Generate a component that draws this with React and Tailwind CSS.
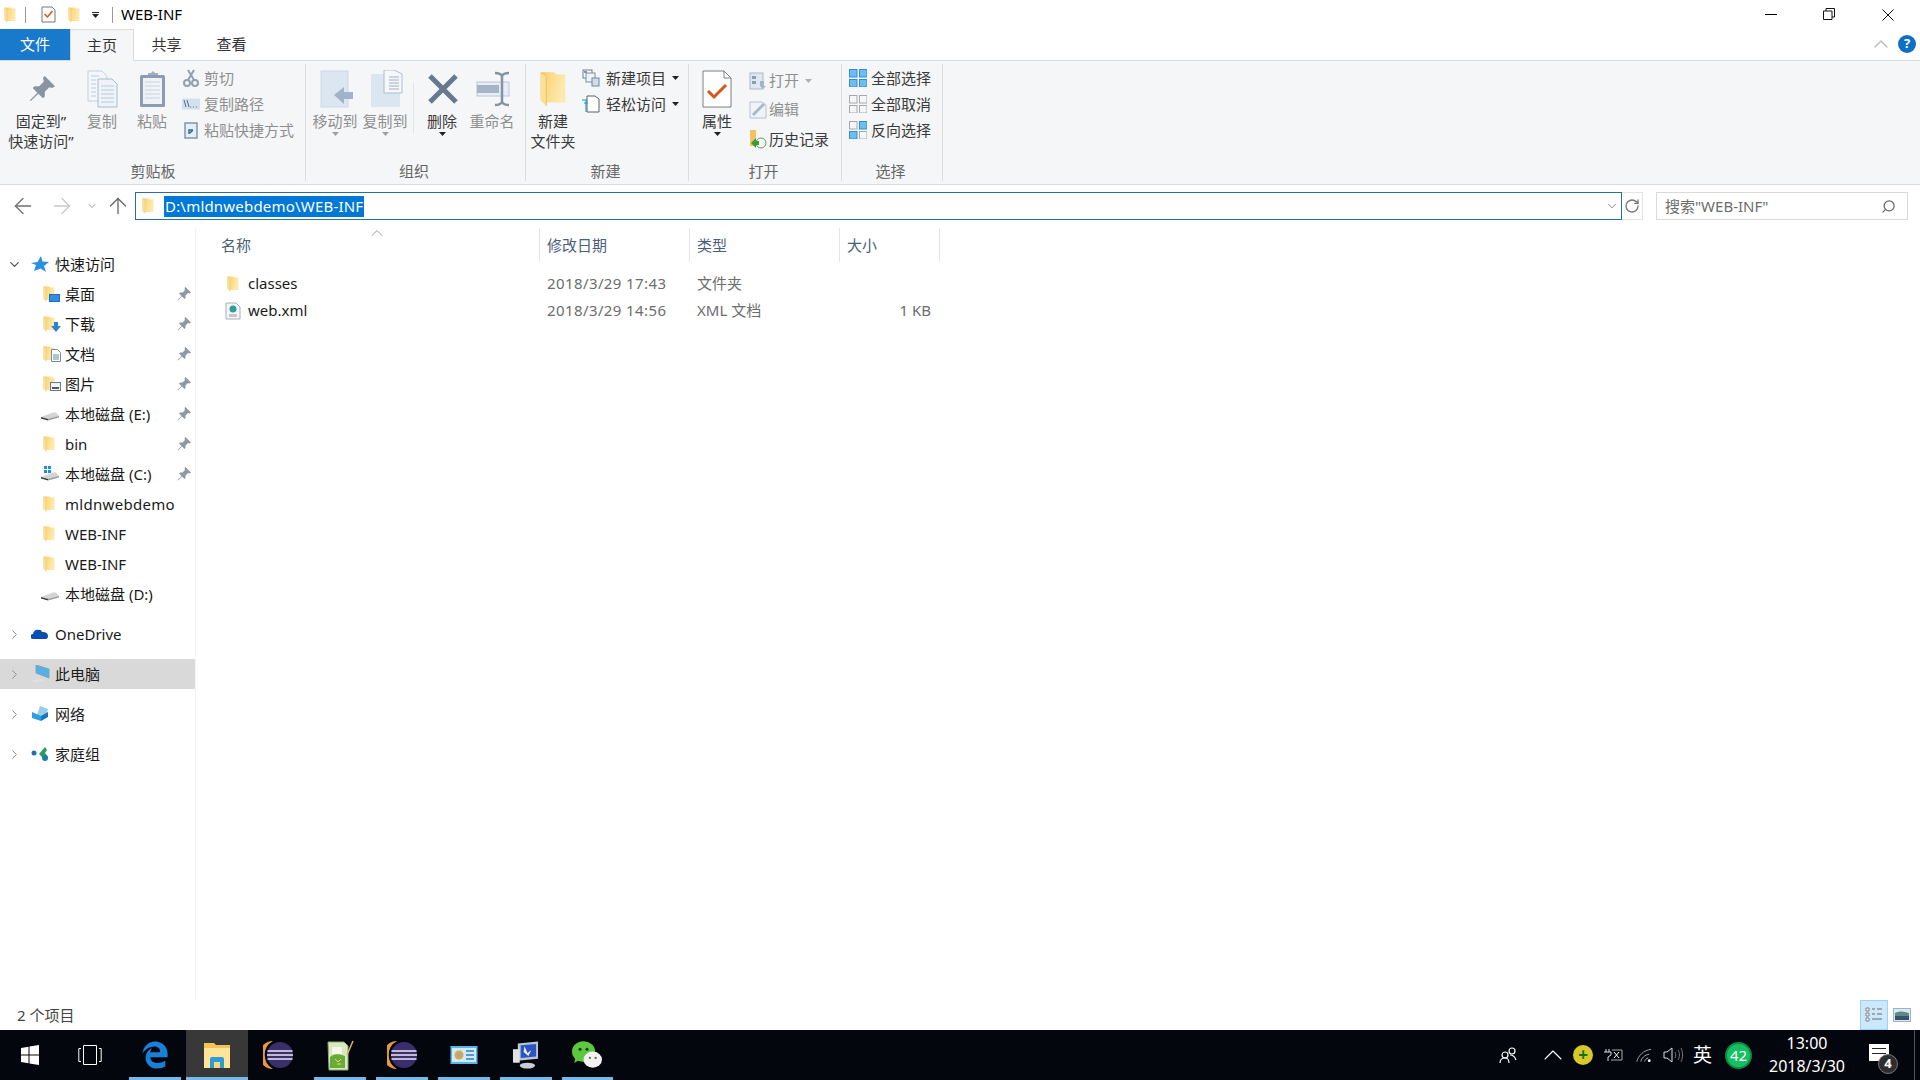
import { ArrowLeft, ArrowRight, ArrowUp, ChevronDown, ChevronRight, ChevronUp, RotateCw, Search } from 'lucide-react';
import { FaEdgeLegacy } from 'react-icons/fa6';

const Folder = ({ className = 'w-[12px] h-4' }) => (
  <svg viewBox="0 0 24 32" className={className}>
    <defs>
      <linearGradient id="folderBody" x1="0" y1="0" x2="1" y2="0.300">
        <stop offset="0" stopColor="#f3bf55" />
        <stop offset="0.350" stopColor="#fbd985" />
        <stop offset="1" stopColor="#fdeaae" />
      </linearGradient>
    </defs>
    <path d="M1 1h12l2 2h8v25H3l-2-3z" fill="url(#folderBody)" />
    <path d="M1 2l5 3v26l-5-5z" fill="#fbe09a" />
    <path d="M6 5v26" stroke="#efc263" strokeWidth="1" />
  </svg>
);

const Pin = ({ className = 'w-[14px] h-[14px]', color = '#8f98a2' }) => (
  <svg viewBox="0 0 14 14" className={className}>
    <path d="M8.500 0L14 5.500L12.500 6.500L11 6L8.500 8.500L8.500 11L7.500 12L5 9.500L1 13.500L0.500 13L4.500 9L2 6.500L3 5.500L5.500 5.500L8 3L7.500 1z" fill={color} />
  </svg>
);

const Drive = ({ win }) => (
  <svg viewBox="0 0 20 16" className="w-5 h-4">
    <path d="M1 11L13 6.500h3L19 10L8 14z" fill="#d4d4d4" />
    <path d="M1 11L8 13v1.500L1 12.500z" fill="#3c3c3c" />
    <path d="M8 13L19 10v1.500L8 14.500z" fill="#9a9a9a" />
    {win && <path d="M4 0h3v3H4zM8 0h3v3H8zM4 4h3v3H4zM8 4h3v3H8z" fill="#1e8fe0" />}
  </svg>
);

const Caret = ({ color = '#333', className = '' }) => (
  <svg viewBox="0 0 7 4" className={`w-[7px] h-1 ${className}`}>
    <path d="M0 0h7L3.500 4z" fill={color} />
  </svg>
);

const PinBig = () => <Pin className="w-[26px] h-[26px] ml-[2px]" color="#8a94a0" />;

const DocsIcon = () => (
  <svg viewBox="0 0 32 38" className="w-8 h-[38px] ml-[2px]">
    <path d="M1 1h14l5 5v25H1z" fill="#f3f6fa" stroke="#c3d0de" />
    <path d="M11 9h14l5 5v23H11z" fill="#eef3f9" stroke="#a9bbd0" />
    <path d="M4 6h8M4 10h5M4 14h5M4 18h5M4 22h5M4 26h5M14 16h13M14 20h13M14 24h13M14 28h13M14 32h13" stroke="#bccbdb" />
  </svg>
);

const PasteIcon = () => (
  <svg viewBox="0 0 28 38" className="w-[28px] h-[38px] ml-[1px]">
    <rect x="1" y="5" width="25" height="32" rx="1.500" fill="#8e9cb3" />
    <rect x="4" y="8" width="19" height="26" fill="#eef2f7" />
    <path d="M6 12h15M6 16h15M6 20h15M6 24h15M6 28h15" stroke="#c9d4e0" />
    <path d="M9 5h10V3h-3l-2-2-2 2H9z" fill="#a4aebd" />
  </svg>
);

const MoveIcon = () => (
  <svg viewBox="0 0 34 38" className="w-[34px] h-[38px] ml-[3px]">
    <rect x="1" y="1" width="27" height="36" fill="#dce6f1" stroke="#ccd8e6" />
    <path d="M14 25l10-8v5h9v7h-9v5z" fill="#9fb3ca" />
  </svg>
);

const CopyToIcon = () => (
  <svg viewBox="0 0 34 38" className="w-[34px] h-[38px] ml-[3px]">
    <rect x="1" y="4" width="29" height="33" fill="#dce6f1" />
    <path d="M14 0h10l8 4v19H14z" fill="#f5f7fa" stroke="#aebdce" />
    <path d="M19 7h10M19 10h10M19 13h10M19 16h10M19 19h10" stroke="#9eafc3" />
  </svg>
);

const DeleteIcon = () => (
  <svg viewBox="0 0 32 32" className="w-8 h-8 ml-[1px]">
    <path d="M3 3L29 29M29 3L3 29" stroke="#67798f" strokeWidth="5" />
  </svg>
);

const RenameIcon = () => (
  <svg viewBox="0 0 36 36" className="w-9 h-9 ml-[3px]">
    <rect x="1" y="11" width="32" height="14" fill="#e6edf5" stroke="#b8c8d8" />
    <rect x="1" y="14" width="22" height="8" fill="#a5b4c6" />
    <path d="M19 2c4 0 6 1 7 3c1-2 3-3 7-3M26 5v26M19 34c4 0 6-1 7-3c1 2 3 3 7 3" stroke="#8593a5" strokeWidth="2.500" fill="none" />
  </svg>
);

const NewFolderBig = () => <Folder className="w-[28px] h-[36px] mt-[1px]" />;

const NewItem = () => (
  <svg viewBox="0 0 18 18" className="w-[18px] h-[18px]">
    <rect x="1" y="1" width="9" height="8" fill="#fff" stroke="#6d7f92" />
    <rect x="4" y="4" width="9" height="9" fill="#eef3f8" stroke="#7d8ea1" />
    <rect x="10" y="9" width="7" height="8" fill="#cfdeee" stroke="#6f88a1" />
    <path d="M2 2h3v2H2z" fill="#7f93a8" />
  </svg>
);

const EasyAccess = () => (
  <svg viewBox="0 0 18 18" className="w-[18px] h-[18px]">
    <path d="M5 1h8l4 3v13H5z" fill="#fff" stroke="#53606e" />
    <path d="M0 5h5M2 8h4M4 5v12" stroke="#1c8dd9" strokeWidth="1" fill="none" />
  </svg>
);

const Props = () => (
  <svg viewBox="0 0 30 38" className="w-[30px] h-[38px]">
    <path d="M1 1h21l7 7v29H1z" fill="#fff" stroke="#7b7f84" />
    <path d="M22 1v7h7" fill="none" stroke="#7b7f84" />
    <path d="M6 21l6 6L24 15" fill="none" stroke="#d8541f" strokeWidth="3" />
  </svg>
);

const OpenIcon = () => (
  <svg viewBox="0 0 18 18" className="w-[18px] h-[18px]">
    <rect x="1" y="1" width="13" height="16" fill="#dfe7f0" stroke="#a9b8c8" />
    <path d="M3 4h4v3H3zM3 9h4v3H3z" fill="#8b9db2" />
    <path d="M11 9h4v5h2l-3 3-3-3z" fill="#a5b6c9" />
  </svg>
);

const EditIcon = () => (
  <svg viewBox="0 0 18 18" className="w-[18px] h-[18px]">
    <path d="M1 1h12l4 3v13H1z" fill="#f0f4f8" stroke="#b5c3d2" />
    <path d="M4 14L15 3" stroke="#a9b9ca" strokeWidth="3" />
  </svg>
);

const HistoryIcon = () => (
  <svg viewBox="0 0 18 20" className="w-[18px] h-5">
    <path d="M1 1h6v16H1z" fill="#f0c45f" />
    <circle cx="12" cy="14" r="5" fill="#f4f6f4" stroke="#61a05a" />
    <path d="M2 14l5-5v3h3v4H7v3z" fill="#3d9a3c" />
  </svg>
);

const SelectIcon = ({ cells }) => (
  <svg viewBox="0 0 18 18" className="w-[18px] h-[18px]">
    {[[0, 0], [10, 0], [0, 10], [10, 10]].map(([x, y], i) => (
      <rect key={i} x={x + 0.5} y={y + 0.5} width="7.500" height="7.500" fill={cells[i] ? '#6fbcf0' : '#f5f6f7'} stroke={cells[i] ? '#2f8fd6' : '#a8a8a8'} />
    ))}
  </svg>
);

const BigButton = ({ w = 'w-[50px]', icon, lines, disabled, arrow }) => (
  <div className={`${w} shrink-0 flex flex-col items-center pt-[4px]`}>
    <div className="h-[43px] pb-[2px] flex items-center justify-center">{icon}</div>
    {lines.map((l) => (
      <div key={l} className={`leading-5 whitespace-nowrap ${disabled ? 'text-[#8f8f8f]' : 'text-[#3a3a3a]'}`}>{l}</div>
    ))}
    {arrow && <Caret className="mt-[1px]" color={disabled ? '#a0a0a0' : '#222'} />}
  </div>
);

const SmallButton = ({ icon, label, disabled, arrow, h = 'h-[26px]', gap = 'gap-[5px]', arrowGap = 'ml-0' }) => (
  <div className={`${h} flex items-center ${gap} whitespace-nowrap ${disabled ? 'text-[#8f8f8f]' : 'text-[#3a3a3a]'}`}>
    <span className="w-[18px] flex justify-center shrink-0">{icon}</span>
    <span>{label}</span>
    {arrow && <Caret className={arrowGap} color={disabled ? '#b0b0b0' : '#222'} />}
  </div>
);

const Group = ({ w, label, children, pad, labelPad = 'pr-[3px]' }) => (
  <div className={`${w} shrink-0 flex flex-col border-r border-[#dcdddf] mt-[3px] mb-[3px]`}>
    <div className={`flex flex-1 items-start ${pad}`}>{children}</div>
    <div className={`h-5 ${labelPad} leading-5 text-center text-[#666]`}>{label}</div>
  </div>
);

const Ribbon = () => (
  <div className="h-[124px] bg-[#f5f6f7] border-b border-[#dadbdc] flex text-[15px] shrink-0">
    <Group w="w-[306px]" label="剪贴板" pad="pl-[5px]" labelPad="pl-px">
      <BigButton w="w-[72px]" icon={<PinBig />} lines={['固定到”', '快速访问”']} />
      <BigButton icon={<DocsIcon />} lines={['复制']} disabled />
      <BigButton icon={<PasteIcon />} lines={['粘贴']} disabled />
      <div className="pl-[5px] pt-[1px] flex flex-col">
        <SmallButton disabled gap="gap-1" label="剪切" icon={<svg viewBox="0 0 16 18" className="w-4 h-[18px]"><path d="M5 1l6 10M11 1L5 11" stroke="#8fa1b5" strokeWidth="2" /><circle cx="4" cy="14" r="3" fill="none" stroke="#8fa1b5" strokeWidth="2" /><circle cx="12" cy="14" r="3" fill="none" stroke="#8fa1b5" strokeWidth="2" /></svg>} />
        <SmallButton disabled gap="gap-1" label="复制路径" icon={<svg viewBox="0 0 18 12" className="w-[18px] h-3"><rect width="18" height="11" y="0.500" fill="#d4e0ee" /><path d="M2 2l2 7M5 2l2 7M8 9h1M11 9h1M14 9h1" stroke="#52708f" /></svg>} />
        <SmallButton disabled gap="gap-1" label="粘贴快捷方式" icon={<svg viewBox="0 0 14 18" className="w-[14px] h-[18px]"><rect x="1" y="2" width="12" height="15" fill="#e7edf4" stroke="#7f96ae" strokeWidth="1.500" /><path d="M5 13V9h4M9 9L6 12" stroke="#2c6ea8" strokeWidth="1.500" fill="none" /></svg>} />
      </div>
    </Group>
    <Group w="w-[220px]" label="组织" pad="pl-[4px]">
      <BigButton icon={<MoveIcon />} lines={['移动到']} disabled arrow />
      <BigButton icon={<CopyToIcon />} lines={['复制到']} disabled arrow />
      <div className="w-px h-[50px] bg-[#e3e4e6] mt-[19px] mx-[3px]" />
      <BigButton icon={<DeleteIcon />} lines={['删除']} arrow />
      <BigButton icon={<RenameIcon />} lines={['重命名']} disabled />
    </Group>
    <Group w="w-[163px]" label="新建" pad="pl-[2px]">
      <BigButton icon={<NewFolderBig />} lines={['新建', '文件夹']} />
      <div className="pl-[4px] pt-[1px] flex flex-col">
        <SmallButton gap="gap-[6px]" label="新建项目" icon={<NewItem />} arrow />
        <SmallButton gap="gap-[6px]" label="轻松访问" icon={<EasyAccess />} arrow />
      </div>
    </Group>
    <Group w="w-[153px]" label="打开" pad="pl-[3px]">
      <BigButton icon={<Props />} lines={['属性']} arrow />
      <div className="pl-[7px] pt-[2px] flex flex-col">
        <SmallButton disabled h="h-[29px]" gap="gap-[2px]" arrowGap="ml-1" label="打开" icon={<OpenIcon />} arrow />
        <SmallButton disabled h="h-[29px]" gap="gap-[2px]" label="编辑" icon={<EditIcon />} />
        <SmallButton h="h-[30px]" gap="gap-[2px]" label="历史记录" icon={<HistoryIcon />} />
      </div>
    </Group>
    <Group w="w-[101px]" label="选择" pad="pl-[7px]">
      <div className="pt-[1px] flex flex-col">
        <SmallButton gap="gap-1" label="全部选择" icon={<SelectIcon cells={[1, 1, 1, 1]} />} />
        <SmallButton gap="gap-1" label="全部取消" icon={<SelectIcon cells={[0, 0, 0, 0]} />} />
        <SmallButton gap="gap-1" label="反向选择" icon={<SelectIcon cells={[0, 1, 1, 0]} />} />
      </div>
    </Group>
  </div>
);

const TitleBar = () => (
  <div className="h-[29px] flex items-center shrink-0">
    <Folder className="w-3 h-4 ml-1" />
    <div className="w-px h-4 bg-[#999] ml-[9px]" />
    <svg viewBox="0 0 15 17" className="w-[15px] h-[17px] ml-[15px]">
      <path d="M1 1h10l3 3v12H1z" fill="#fff" stroke="#777" />
      <path d="M3.500 8l3 3 5-6" fill="none" stroke="#d8541f" strokeWidth="1.500" />
    </svg>
    <Folder className="w-3 h-4 ml-3" />
    <div className="ml-[12px] flex flex-col items-center gap-[1px]">
      <div className="w-[7px] h-px bg-[#222]" />
      <Caret color="#222" />
    </div>
    <div className="w-px h-4 bg-[#999] ml-[13px]" />
    <span className="ml-2 text-[15px] text-black">WEB-INF</span>
    <div className="ml-auto flex items-center">
      <div className="w-3 h-px bg-black mr-[46px]" />
      <svg viewBox="0 0 12 12" className="w-3 h-3 mr-[47px] mb-[1px]">
        <path d="M0.500 3h8.500v8.500H0.500zM3 3V0.500h8.500V9H9" fill="none" stroke="#111" />
      </svg>
      <svg viewBox="0 0 12 12" className="w-3 h-3 mr-[26px]">
        <path d="M0.500 0.500L11.500 11.500M11.500 0.500L0.500 11.500" stroke="#111" />
      </svg>
    </div>
  </div>
);

const Tabs = () => (
  <div className="h-[32px] flex text-[15px] border-b border-[#dadbdc] shrink-0">
    <div className="w-[70px] h-[31px] bg-[#1979ca] text-white flex items-center justify-center">文件</div>
    <div className="w-[64px] h-[32px] bg-[#f5f6f7] border-x border-t border-[#dadbdc] text-[#333] flex items-center justify-center">主页</div>
    <div className="w-[65px] flex items-center justify-center text-[#333]">共享</div>
    <div className="w-[65px] flex items-center justify-center text-[#333]">查看</div>
    <div className="ml-auto flex items-center mb-[1px]">
      <ChevronUp size={24} strokeWidth={1.500} className="text-[#bdbdbd] mr-[5px]" />
      <div className="w-[18px] h-[18px] mr-[4px] rounded-full bg-[#0f6fc6] text-white text-[13px] font-bold flex items-center justify-center">?</div>
    </div>
  </div>
);

const AddressBar = () => (
  <div className="h-[43px] flex items-start pt-[7px] shrink-0 text-[15px]">
    <ArrowLeft size={26} strokeWidth={1.200} className="text-[#6f6f6f] ml-[10px] mt-[1px]" />
    <ArrowRight size={26} strokeWidth={1.200} className="text-[#c9c9c9] ml-[13px] mt-[1px]" />
    <ChevronDown size={12} strokeWidth={1.500} className="text-[#777] ml-[11px] mt-2" />
    <ArrowUp size={26} strokeWidth={1.200} className="text-[#666] ml-[7px] mt-[1px]" />
    <div className="ml-1 w-[1487px] h-[28px] border border-[#2a6ea5] bg-white flex items-center">
      <Folder className="w-3 h-4 ml-[6px]" />
      <span className="ml-[10px] bg-[#0078d7] text-white h-[21px] leading-[21px] px-px tracking-[0.2px]">D:\mldnwebdemo\WEB-INF</span>
      <ChevronDown size={14} strokeWidth={1.200} className="text-[#555] ml-auto mr-[2px]" />
    </div>
    <div className="w-[21px] h-[28px] border border-l-0 border-[#e3e3e3] flex items-center justify-center">
      <RotateCw size={16} strokeWidth={2} className="text-[#777]" />
    </div>
    <div className="ml-[13px] w-[252px] h-[28px] border border-[#d9d9d9] flex items-center pl-2 pr-[11px] text-[#6d6d6d]">
      <span>搜索"WEB-INF"</span>
      <Search size={15} strokeWidth={2} className="ml-auto text-[#666] -scale-x-100" />
    </div>
  </div>
);

const navItems = [
  { label: '桌面', badge: 'desk', pin: true },
  { label: '下载', badge: 'down', pin: true },
  { label: '文档', badge: 'doc', pin: true },
  { label: '图片', badge: 'pic', pin: true },
  { label: '本地磁盘 (E:)', drive: true, pin: true },
  { label: 'bin', pin: true },
  { label: '本地磁盘 (C:)', drive: true, win: true, pin: true },
  { label: 'mldnwebdemo', wide: true },
  { label: 'WEB-INF' },
  { label: 'WEB-INF' },
  { label: '本地磁盘 (D:)', drive: true },
];

const Badge = ({ type }) => {
  if (type === 'desk') return <span className="absolute right-0 bottom-0 w-[11px] h-[8px] bg-[#2e8fe0] border border-[#1b6fb8]" />;
  if (type === 'down') return <svg viewBox="0 0 10 10" className="absolute -right-[1px] bottom-0 w-[10px] h-[10px]"><path d="M3 0h4v4h3L5 10 0 4h3z" fill="#2d7fd8" /></svg>;
  if (type === 'doc') return (
    <svg viewBox="0 0 10 13" className="absolute -right-[1px] bottom-0 w-[10px] h-[13px]">
      <path d="M0.500 0.500h6l3 3v9h-9z" fill="#fff" stroke="#7d8c9c" />
      <path d="M2 6h6M2 8h6M2 10h6" stroke="#5b87b5" />
    </svg>
  );
  return (
    <svg viewBox="0 0 11 9" className="absolute -right-[1px] bottom-[1px] w-[11px] h-[9px]">
      <rect x="0.500" y="0.500" width="10" height="8" fill="#f2f5f8" stroke="#68788a" />
      <path d="M2 6h7" stroke="#4d5d70" strokeWidth="2" />
    </svg>
  );
};

const NavRow = ({ item }) => (
  <div className="h-[30px] flex items-center">
    <span className="relative w-5 h-4 ml-[40px] flex justify-start shrink-0">
      {item.drive ? <Drive win={item.win} /> : <Folder className="w-3 h-4 ml-[3px]" />}
      {item.badge && <Badge type={item.badge} />}
    </span>
    <span className={`ml-[5px] whitespace-nowrap ${item.wide ? 'tracking-[0.3px]' : ''}`}>{item.label}</span>
    {item.pin && <Pin className="w-[14px] h-[14px] ml-auto mr-1" />}
  </div>
);

const OneDriveIcon = () => (
  <svg viewBox="0 0 18 12" className="w-[18px] h-3">
    <path d="M2 11a2.500 2.500 0 0 1 0-5c.5-3 3-5 5.500-4 1.500-.5 3 .5 3.500 2 3-.5 6 1 6 4 0 2-1 3-2 3z" fill="#0a4fb0" />
  </svg>
);

const PcIcon = () => (
  <svg viewBox="0 0 20 18" className="w-5 h-[18px]">
    <path d="M6 0l13 4v9L6 8z" fill="#55b0e6" stroke="#7fa5bf" />
    <path d="M1 16l9-2 5 1-9 2z" fill="#dfe3e6" />
  </svg>
);

const NetIcon = () => (
  <svg viewBox="0 0 18 16" className="w-[18px] h-4">
    <path d="M9 0l8 3-2 8-10 1z" fill="#9ccde8" />
    <path d="M1 6l9 4v5l-9-3z" fill="#2f9ee0" />
    <path d="M10 10l7-4v5l-7 4z" fill="#1677bd" />
  </svg>
);

const HomeGroupIcon = () => (
  <svg viewBox="0 0 18 14" className="w-[18px] h-[14px]">
    <circle cx="3" cy="6" r="2.500" fill="#1f6fb8" />
    <path d="M14 0l2 3-2 3 3 4-3 3-6-6z" fill="#2f9a5d" />
    <circle cx="14" cy="11" r="3" fill="#1c7fa8" />
  </svg>
);

const TopRow = ({ icon, label, active, open }) => (
  <div className={`h-[30px] flex items-center ${active ? 'bg-[#d9d9d9]' : ''}`}>
    <span className={`w-[30px] flex justify-center shrink-0 ${open ? 'pr-[2px]' : 'pr-px'}`}>
      {open ? <ChevronDown size={15} strokeWidth={2} className="text-[#555]" /> : <ChevronRight size={15} strokeWidth={1.500} className="text-[#8a8a8a]" />}
    </span>
    <span className="w-5 flex justify-center shrink-0">{icon}</span>
    <span className="ml-[5px]">{label}</span>
  </div>
);

const Sidebar = () => (
  <div className="w-[196px] shrink-0 border-r border-[#f4f4f4] pt-[21px] text-[15px] text-[#1a1a1a]">
    <TopRow open label="快速访问" icon={
      <svg viewBox="0 0 18 16" className="w-[18px] h-4"><path d="M10 0l1.500 5.500L18 6l-5 4 2 6-5.500-3.500L3 15l2-6L0 7l6.500-1z" fill="#2a8fe0" /></svg>
    } />
    {navItems.map((item, i) => <NavRow key={i} item={item} />)}
    <div className="mt-[10px]"><TopRow label="OneDrive" icon={<OneDriveIcon />} /></div>
    <div className="mt-[10px]"><TopRow active label="此电脑" icon={<PcIcon />} /></div>
    <div className="mt-[10px]"><TopRow label="网络" icon={<NetIcon />} /></div>
    <div className="mt-[10px]"><TopRow label="家庭组" icon={<HomeGroupIcon />} /></div>
  </div>
);

const XmlIcon = () => (
  <svg viewBox="0 0 16 18" className="w-4 h-[18px]">
    <path d="M1 1h10l4 4v12H1z" fill="#f6f4f6" stroke="#a8b0b8" />
    <circle cx="8" cy="7" r="3.500" fill="#2f9e9b" />
    <path d="M4 12h8v3H4z" fill="#c9c3cb" />
  </svg>
);

const columns = [
  { label: '名称', w: 'w-[344px]', pad: 'pl-[25px]' },
  { label: '修改日期', w: 'w-[150px]', pad: 'pl-[7px]' },
  { label: '类型', w: 'w-[150px]', pad: 'pl-[7px]' },
  { label: '大小', w: 'w-[100px]', pad: 'pl-[7px]' },
];

const files = [
  { name: 'classes', date: '2018/3/29 17:43', type: '文件夹', size: '', icon: <Folder className="w-3 h-4" /> },
  { name: 'web.xml', date: '2018/3/29 14:56', type: 'XML 文档', size: '1 KB', icon: <XmlIcon /> },
];

const FileList = () => (
  <div className="flex-1 text-[15px]">
    <div className="relative flex h-[34px]">
      {columns.map((c) => (
        <div key={c.label} className={`${c.w} ${c.pad} shrink-0 border-r border-[#e5e5e5] flex items-center text-[#4c607a]`}>{c.label}</div>
      ))}
      <ChevronUp size={20} strokeWidth={1} className="absolute left-[171px] -top-[5px] text-[#888]" />
    </div>
    <div className="pt-2">
      {files.map((f) => (
        <div key={f.name} className="flex h-[27px] items-center">
          <div className="w-[344px] shrink-0 flex items-center pl-[28px]">
            <span className="w-[17px] flex justify-center">{f.icon}</span>
            <span className="ml-[7px] text-[#1a1a1a]">{f.name}</span>
          </div>
          <div className="w-[150px] shrink-0 pl-[7px] text-[#6d6d6d] tracking-[0.4px]">{f.date}</div>
          <div className="w-[150px] shrink-0 pl-[7px] text-[#6d6d6d]">{f.type}</div>
          <div className="w-[100px] shrink-0 pr-[9px] text-right text-[#6d6d6d]">{f.size}</div>
        </div>
      ))}
    </div>
  </div>
);

const StatusBar = () => (
  <div className="h-[31px] pt-[1px] flex items-center text-[15px] text-[#444] shrink-0">
    <span className="ml-[17px]">2 个项目</span>
    <div className="ml-auto flex items-center mr-[9px]">
      <div className="w-[28px] h-[30px] bg-[#cce8ff] border border-[#99d1ff] flex items-center justify-center">
        <svg viewBox="0 0 18 16" className="w-[18px] h-4">
          <path d="M1 1h3v3H1zM1 6h3v3H1zM1 11h3v3H1z" fill="#fff" stroke="#666" strokeWidth="0.800" />
          <path d="M7 2h3M12 2h5M7 7h3M12 7h5M7 12h10" stroke="#666" />
        </svg>
      </div>
      <svg viewBox="0 0 18 14" className="ml-[5px] w-[18px] h-[14px]">
        <rect x="0.500" y="0.500" width="17" height="13" fill="#dce8f0" stroke="#9eb3c7" />
        <path d="M2 5c4-2 9-2 14 0v3H2z" fill="#5e8a86" />
        <path d="M2 8h14v4H2z" fill="#35536a" />
      </svg>
    </div>
  </div>
);

const EclipseIcon = () => (
  <svg viewBox="0 0 30 30" className="w-[30px] h-[30px]">
    <path d="M10 1A14 14 0 0 0 10 29A16 16 0 0 1 10 1z" fill="#e59a3e" />
    <circle cx="17" cy="15" r="13" fill="#3a2f6c" />
    <path d="M4.500 11h25M4 15h26M4.500 19h25" stroke="#eceaf5" strokeWidth="1.500" />
  </svg>
);

const ExplorerIcon = () => (
  <svg viewBox="0 0 28 30" className="w-[28px] h-[30px]">
    <path d="M1 3h10l2 2h14v23H1z" fill="#f1c45a" />
    <path d="M1 8h26v20H1z" fill="#fce59a" />
    <path d="M7 28v-9a2 2 0 0 1 2-2h10a2 2 0 0 1 2 2v9z" fill="#2c9bd6" />
    <path d="M11 28v-6h6v6z" fill="#fbd97a" />
  </svg>
);

const BookIcon = () => (
  <svg viewBox="0 0 27 32" className="w-[27px] h-8">
    <path d="M1 3h16l4 4v24H2z" fill="#d9e8c0" stroke="#8aa873" />
    <path d="M5 8h10v7H5z" fill="#f4f7e8" />
    <path d="M3 18c3-3 8-4 15-1v12H3z" fill="#68ab39" />
    <path d="M8 20l3 3 3-3M10 25h4" stroke="#e8d85f" fill="none" />
    <path d="M20 16L26 2" stroke="#d9b85f" strokeWidth="1.500" />
  </svg>
);

const CardIcon = () => (
  <svg viewBox="0 0 28 20" className="w-[28px] h-5">
    <rect x="0.500" y="1" width="27" height="18" fill="#58b4ea" />
    <rect x="2" y="3" width="24" height="14" fill="#cfeafa" />
    <circle cx="9" cy="10" r="4.500" fill="#eaa23a" />
    <circle cx="9" cy="10" r="2" fill="#6fb7e0" />
    <path d="M16 6h8M16 10h8M16 14h8" stroke="#2f7fc1" strokeWidth="1.500" />
  </svg>
);

const MonitorIcon = () => (
  <svg viewBox="0 0 28 30" className="w-[27px] h-[30px]">
    <path d="M6 3L27 1v18L6 21z" fill="#bcc5d2" />
    <path d="M9 5L25 3.500v13L9 18z" fill="#2b55c0" />
    <path d="M13 6l3 7 4-3-3 6-5-4z" fill="#e8eefc" />
    <path d="M1 9h7v14H1z" fill="#dfe3e8" />
    <ellipse cx="16" cy="26" rx="8" ry="3" fill="#c6cdd5" />
  </svg>
);

const WechatIcon = () => (
  <svg viewBox="0 0 26 26" className="w-[30px] h-[30px]">
    <ellipse cx="10" cy="10" rx="10" ry="9" fill="#5cc83c" />
    <path d="M3 15l-1 5 5-3z" fill="#5cc83c" />
    <circle cx="7" cy="8" r="1.300" fill="#17301b" />
    <circle cx="13" cy="8" r="1.300" fill="#17301b" />
    <ellipse cx="18" cy="17" rx="8" ry="7" fill="#f2f2f2" />
    <circle cx="15.500" cy="15.500" r="1" fill="#666" />
    <circle cx="20.500" cy="15.500" r="1" fill="#666" />
  </svg>
);

const taskApps = [
  { icon: <FaEdgeLegacy className="text-[#1a7fd6] text-[28px]" />, on: true },
  { icon: <ExplorerIcon />, on: true, active: true },
  { icon: <EclipseIcon /> },
  { icon: <BookIcon />, on: true },
  { icon: <EclipseIcon />, on: true },
  { icon: <CardIcon />, on: true },
  { icon: <MonitorIcon />, on: true },
  { icon: <WechatIcon />, on: true },
];

const Taskbar = () => (
  <div className="h-[50px] bg-[#03060c] flex items-stretch shrink-0 text-white">
    <div className="w-[60px] flex items-center justify-center">
      <svg viewBox="0 0 18 20" className="w-5 h-5">
        <path d="M0 3l7.500-1.200V9.400H0zM8.500 1.600L18 0v9.400H8.500zM0 10.500h7.500v7.800L0 17zM8.500 10.500H18V20l-9.500-1.600z" fill="#fff" />
      </svg>
    </div>
    <div className="w-[60px] flex items-center justify-center">
      <svg viewBox="0 0 24 20" className="w-6 h-5">
        <path d="M5.500 .5h13v19h-13zM3 3.500H.8v13H3M21 3.500h2.200v13H21" fill="none" stroke="#fff" />
      </svg>
    </div>
    <div className="w-1 shrink-0" />
    {taskApps.map((a, i) => (
      <div key={i} className={`w-[61.8px] flex items-center justify-center relative ${a.active ? 'bg-[#383838]' : ''}`}>
        {a.icon}
        {a.on && <span className={`absolute bottom-0 h-[3px] bg-[#76b9ed] ${a.active ? 'inset-x-0' : 'inset-x-[5px]'}`} />}
      </div>
    ))}
    <div className="ml-auto flex items-center pr-[5px]">
      <svg viewBox="0 0 18 18" className="w-[18px] h-[18px] mr-5">
        <circle cx="6" cy="9" r="3" fill="none" stroke="#fff" strokeWidth="1.200" />
        <circle cx="13" cy="5" r="3" fill="none" stroke="#fff" strokeWidth="1.200" />
        <path d="M1 17c0-3 2-5 5-5s4 2 4 5M11 9c3 0 5 2 6 5" fill="none" stroke="#fff" strokeWidth="1.200" />
      </svg>
      <ChevronUp size={32} strokeWidth={0.800} className="mr-1" />
      <div className="w-5 h-5 rounded-full bg-[#d8c92a] text-[#1e6d1e] text-[17px] font-bold leading-5 text-center mr-[10px]">+</div>
      <svg viewBox="0 0 20 14" className="w-5 h-[14px] mr-[13px]">
        <path d="M3 1v3M6 1v3M1 4h7v3L5 9v4" fill="none" stroke="#ddd" />
        <path d="M9 2h10v10H8" fill="none" stroke="#aaa" />
        <path d="M11 4l5 6M16 4l-5 6" stroke="#fff" />
      </svg>
      <svg viewBox="0 0 18 16" className="w-[17px] h-4 mr-[10px]">
        <path d="M1 15C2 9 8 3 16 2M5 15c1-4 4-7 9-8M9 15c.5-2 2-3.500 4-4" fill="none" stroke="#aaa" />
        <circle cx="14" cy="14" r="1.500" fill="#fff" />
      </svg>
      <svg viewBox="0 0 20 16" className="w-5 h-4 mr-[10px]">
        <path d="M1 5h3l5-4v14l-5-4H1z" fill="none" stroke="#ddd" />
        <path d="M12 5c1 2 1 4 0 6M15 3c2 3 2 7 0 10M18 1c2 4 2 10 0 14" fill="none" stroke="#777" />
      </svg>
      <span className="w-[19px] text-[19px] leading-5 mr-[13px]">英</span>
      <div className="w-[27px] h-[27px] rounded-full bg-[#14c060] border-2 border-[#0b8a46] text-[15px] flex items-center justify-center mr-[15px]">42</div>
      <div className="w-[80px] flex flex-col items-center text-[16px] leading-[23px] whitespace-nowrap mr-[22px]">
        <span>13:00</span>
        <span>2018/3/30</span>
      </div>
      <div className="relative w-[20px] h-[17px] bg-white mr-[25px] mb-[6px]">
        <span className="absolute inset-x-[3px] top-[4px] h-[6px] border-y border-[#222]" />
        <span className="absolute -right-[9px] -bottom-[13px] w-[20px] h-[20px] rounded-full bg-[#2e2e2e] border border-[#777] text-[13px] font-bold flex items-center justify-center">4</span>
      </div>
      <div className="w-px self-stretch bg-[#555]" />
    </div>
  </div>
);

export default function App() {
  return (
    <div className="w-[1920px] h-[1080px] flex flex-col bg-white overflow-hidden font-['Noto_Sans','Noto_Sans_CJK_SC',sans-serif]">
      <TitleBar />
      <Tabs />
      <Ribbon />
      <AddressBar />
      <div className="flex-1 flex min-h-0">
        <Sidebar />
        <FileList />
      </div>
      <StatusBar />
      <Taskbar />
    </div>
  );
}
